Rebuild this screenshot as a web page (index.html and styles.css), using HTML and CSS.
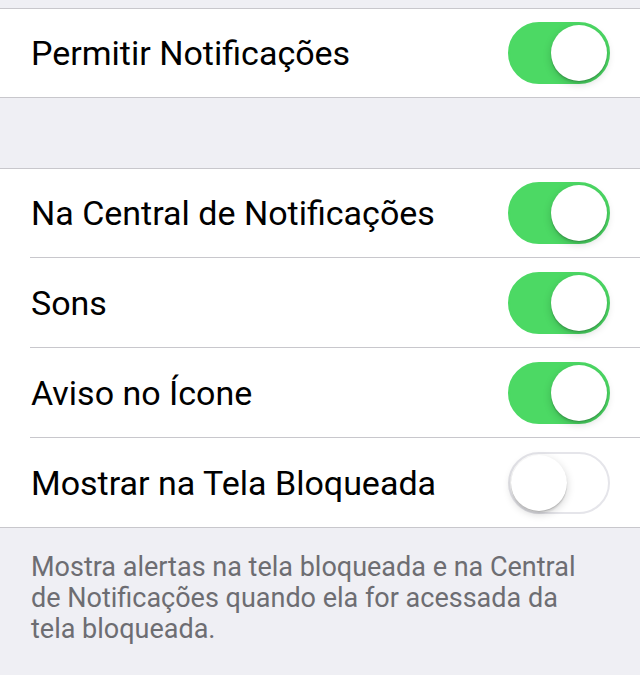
FILE: index.html
```html
<!DOCTYPE html>
<html lang="pt">
<head>
    <meta charset="UTF-8">
    <meta name="viewport" content="width=device-width, initial-scale=1.0">
    <title>Notificações</title>
    <link rel="stylesheet" href="styles.css">
</head>
<body>
    <div class="page">
        <div class="group">
            <div class="row">
                <span class="label">Permitir Notificações</span>
                <span class="switch on"><span class="knob"></span></span>
            </div>
        </div>

        <div class="spacer"></div>

        <div class="group">
            <div class="row">
                <span class="label">Na Central de Notificações</span>
                <span class="switch on"><span class="knob"></span></span>
            </div>
            <div class="row">
                <span class="label">Sons</span>
                <span class="switch on"><span class="knob"></span></span>
            </div>
            <div class="row">
                <span class="label">Aviso no Ícone</span>
                <span class="switch on"><span class="knob"></span></span>
            </div>
            <div class="row">
                <span class="label">Mostrar na Tela Bloqueada</span>
                <span class="switch"><span class="knob"></span></span>
            </div>
        </div>

        <p class="footer">Mostra alertas na tela bloqueada e na Central de Notificações quando ela for acessada da tela bloqueada.</p>
    </div>
</body>
</html>
```

FILE: styles.css
```css
body {
    margin: 0;
    background-color: #efeff4;
    font-family: Roboto, "Liberation Sans", sans-serif;
}
.page {
    padding-top: 8px;
}
.group {
    background-color: #fff;
    border-top: 1px solid #c8c7cc;
    border-bottom: 1px solid #c8c7cc;
    padding-left: 30px;
}
.row {
    display: flex;
    align-items: center;
    justify-content: space-between;
    height: 89px;
    padding-right: 30px;
    border-top: 1px solid #c8c7cc;
}
.row:first-child {
    border-top: none;
    height: 88px;
}
.label {
    font-size: 34px;
    color: #000;
    padding-left: 1px;
}
.spacer {
    height: 70px;
}
.switch {
    position: relative;
    box-sizing: border-box;
    width: 102px;
    height: 62px;
    border-radius: 31px;
    background-color: #fff;
    border: 2px solid #e5e5ea;
}
.switch.on {
    background-color: #4cd964;
    border-color: #4cd964;
}
.knob {
    position: absolute;
    top: 1px;
    left: 1px;
    width: 56px;
    height: 56px;
    border-radius: 50%;
    background-color: #fff;
    box-shadow: 0 3px 8px rgba(0, 0, 0, 0.18), 0 1px 1px rgba(0, 0, 0, 0.16), 0 3px 1px rgba(0, 0, 0, 0.06);
}
.switch.on .knob {
    left: auto;
    right: 1px;
}
.footer {
    margin: 0;
    padding: 24px 40px 0 31px;
    font-size: 27px;
    line-height: 31px;
    color: #6d6d72;
}
```
